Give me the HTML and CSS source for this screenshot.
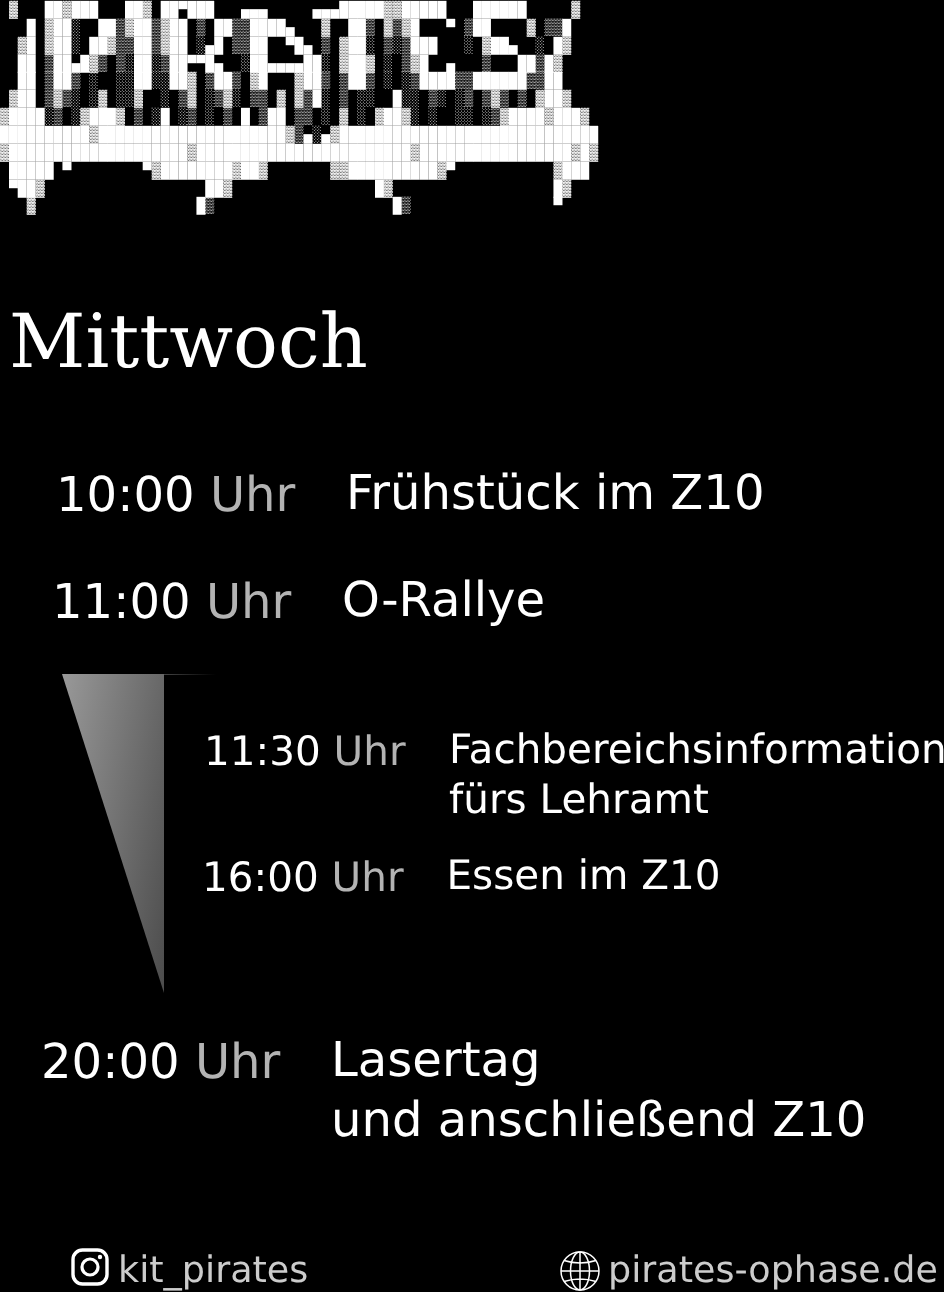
FILE: index.html
```html
<!DOCTYPE html>
<html lang="de">
<head>
<meta charset="utf-8">
<title>Mittwoch</title>
<link rel="stylesheet" href="styles.css">
</head>
<body>
<main class="page">
<div class="logo-box">
<pre class="logo" aria-label="Pirates"> ▓   ██▓███   ██▓ ██▀███   ▄▄▄     ▄▄▄█████▓▓█████   ██████     ▓
   █ ▓██░  ██▒▓██▒▓██ ▒ ██▒▒████▄   ▓  ██▒ ▓▒▓█   ▀ ▒██    ▓ ▒▒█
  ▓█ ▓██░ ██▓▒▒██▒▓██ ░▄█ ▒▒██  ▀█▄ ▒ ▓██░ ▒░▒███   ░ ▓██▄  ░ █▓
  ██ ▒██▄█▓▒ ▒░██░▒██▀▀█▄  ░██▄▄▄▄██░ ▓██▓ ░ ▒▓█  ▄   ▒   ██▒█▓
  ██ ▒██▒ ░  ░░██░░██▓ ▒██▒ ▓█   ▓██▒ ▒██▒ ░ ░▒████▒▒██████▒▒██
 ▓██ ▒▓▒░ ░▓ ░░▓  ░ ▒▓ ░▒▓░ ▒▒ ▓ ▓▒█░ ▒ ░░  █░░ ▒░ ░▒ ▒▓▒ ▒ ▓██▓
▓████░▒ ░▓███▓ ▒ ░█ ░▒ ░ ▒ █ ▒██ ▒▒ ░ ▓ ░ ▓██▓░ ░  ░░ ░▒▓████▓███▓
██████████▓█████████████████████▓▒▄░▄▓█████████████████████████████
▓████████████████████▓████████████████████████▓█████████████████▓█▓
 █████ ▀        ▀▓████████▓██▓       ▓▓██████████▓▀           ▓███
 ▀██▓                  ██▓                █▓                  █▓
   ▓                  █▒                    █▒                ▀</pre>
</div>

<h1 class="day">Mittwoch</h1>

<section class="schedule">
  <div class="row row-first">
    <span class="time">10:00 <span class="unit">Uhr</span></span>
    <span class="what">Frühstück im Z10</span>
  </div>
  <div class="row row-second">
    <span class="time">11:00 <span class="unit">Uhr</span></span>
    <span class="what">O-Rallye</span>
  </div>

  <div class="sub">
    <div class="wedge"></div>
    <div class="sub-body">
      <div class="fade"></div>
      <div class="row sub-row sub-first">
        <span class="time">11:30 <span class="unit">Uhr</span></span>
        <span class="what">Fachbereichsinformation<br>fürs Lehramt</span>
      </div>
      <div class="row sub-row sub-second">
        <span class="time">16:00 <span class="unit">Uhr</span></span>
        <span class="what">Essen im Z10</span>
      </div>
    </div>
  </div>

  <div class="row row-last">
    <span class="time">20:00 <span class="unit">Uhr</span></span>
    <span class="what">Lasertag<br>und anschließend Z10</span>
  </div>
</section>

<footer class="footer">
  <div class="link link-insta">
    <svg class="icon icon-insta" viewBox="0 0 38 38" aria-hidden="true">
      <rect x="2" y="2" width="34" height="34" rx="9.5" fill="none" stroke="#fff" stroke-width="3.4"/>
      <circle cx="19" cy="19" r="8" fill="none" stroke="#fff" stroke-width="3.2"/>
      <circle cx="29" cy="9" r="2.2" fill="#fff"/>
    </svg>
    <span>kit_pirates</span>
  </div>
  <div class="link link-web">
    <svg class="icon icon-globe" viewBox="0 0 40 40" aria-hidden="true">
      <g fill="none" stroke="#fff" stroke-width="1.5">
        <circle cx="20" cy="20" r="19"/>
        <ellipse cx="20" cy="20" rx="9.5" ry="19"/>
        <path d="M20 1V39M1 20H39M4 9.5Q20 14.5 36 9.5M4 30.5Q20 25.5 36 30.5"/>
      </g>
    </svg>
    <span>pirates-ophase.de</span>
  </div>
</footer>
</main>
</body>
</html>
```
FILE: styles.css
```css
* {
  box-sizing: border-box;
}

html,
body {
  margin: 0;
  background: #000;
}

.page {
  width: 944px;
  height: 1292px;
  overflow: hidden;
  color: #fff;
  font-family: "DejaVu Sans", sans-serif;
  text-rendering: geometricPrecision;
  will-change: transform;
}

.logo-box {
  height: 215px;
  padding-top: 2px;
}

.logo {
  margin: 0;
  font-family: "Liberation Mono", monospace;
  font-size: 14.88px;
  line-height: 16.86px;
  white-space: pre;
  color: #fff;
  transform: scaleY(1.0617);
  transform-origin: 0 0;
}

.day {
  margin: 81px 0 75px 9px;
  font-family: "DejaVu Serif", serif;
  font-size: 74.6px;
  font-weight: 400;
  line-height: 92px;
}

.row {
  display: flex;
  align-items: flex-start;
  white-space: nowrap;
  font-size: 48.1px;
  line-height: 60px;
}

.time {
  flex: none;
  width: 290px;
  padding-top: 2px;
}

.unit {
  color: #b3b3b3;
}

.row-first {
  padding-left: 56px;
  margin-bottom: 45px;
}

.row-second {
  padding-left: 52px;
  margin-bottom: 42px;
}

.row-last {
  padding-left: 41px;
}

.sub {
  display: flex;
  margin: 0 0 37px 62px;
  height: 319px;
}

.wedge {
  flex: none;
  width: 102px;
  height: 319px;
  background: linear-gradient(100deg, #999, #4c4c4c);
  clip-path: polygon(0 0, 100% 0, 100% 100%);
}

.sub-body {
  flex: 1;
  min-width: 0;
}

.fade {
  width: 52px;
  height: 1px;
  margin-bottom: 49px;
  background: linear-gradient(90deg, #444, #000);
}

.sub-row {
  font-size: 40.5px;
  line-height: 50px;
}

.sub-row .time {
  width: 245px;
}

.sub-first {
  padding-left: 40px;
  margin-bottom: 26px;
}

.sub-second {
  padding-left: 38px;
}

.sub-second .time {
  width: 244.5px;
}

.footer {
  display: flex;
  justify-content: space-between;
  margin-top: 97px;
  padding: 0 6px 0 71px;
  font-size: 36.5px;
  line-height: 45px;
  color: #ccc;
  white-space: nowrap;
}

.link {
  display: flex;
  align-items: flex-start;
}

.link-insta {
  gap: 9px;
}

.link-web {
  gap: 8px;
}

.icon {
  flex: none;
  display: block;
}

.icon-insta {
  width: 38px;
  height: 38px;
  margin-top: 1px;
}

.icon-globe {
  width: 40px;
  height: 40px;
  margin-top: 4px;
}
```
